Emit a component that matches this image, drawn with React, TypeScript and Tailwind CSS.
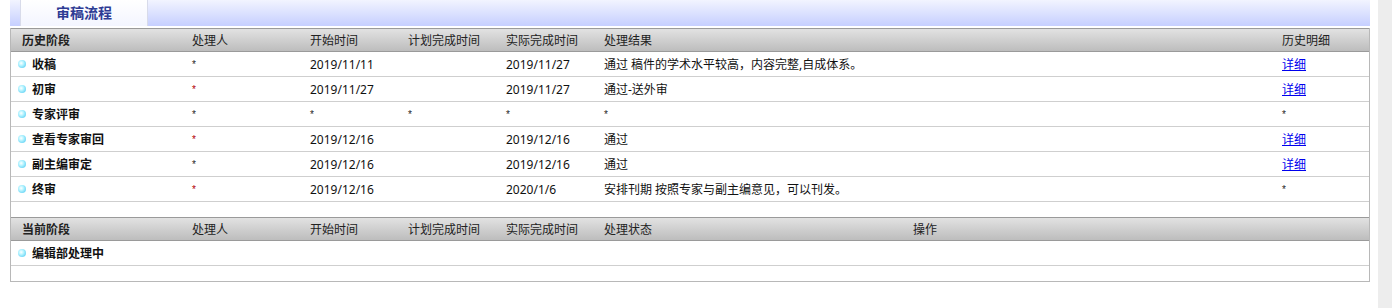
import React from 'react'

type Step = {
  name: string
  handler: string
  red?: boolean
  start: string
  plan: string
  done: string
  result: string
  detail: 'link' | 'star'
}

const history: Step[] = [
  { name: '收稿', handler: '*', start: '2019/11/11', plan: '', done: '2019/11/27', result: '通过 稿件的学术水平较高，内容完整,自成体系。', detail: 'link' },
  { name: '初审', handler: '*', red: true, start: '2019/11/27', plan: '', done: '2019/11/27', result: '通过-送外审', detail: 'link' },
  { name: '专家评审', handler: '*', start: '*', plan: '*', done: '*', result: '*', detail: 'star' },
  { name: '查看专家审回', handler: '*', red: true, start: '2019/12/16', plan: '', done: '2019/12/16', result: '通过', detail: 'link' },
  { name: '副主编审定', handler: '*', start: '2019/12/16', plan: '', done: '2019/12/16', result: '通过', detail: 'link' },
  { name: '终审', handler: '*', red: true, start: '2019/12/16', plan: '', done: '2020/1/6', result: '安排刊期 按照专家与副主编意见，可以刊发。', detail: 'star' },
]

const histCols = 'grid grid-cols-[171px_118px_98px_98px_98px_678px_1fr]'
const curCols = 'grid grid-cols-[171px_118px_98px_98px_98px_309px_1fr]'
const headCls = 'h-[24px] items-center pt-[1px] border-y border-[#9a9a9a] bg-gradient-to-b from-[#e2e2e2] to-[#bdbdbd] text-[#222]'
const rowCls = 'h-[25px] items-center pt-[2px] border-b border-[#cfcfcf] text-[#111]'

function Bullet() {
  return (
    <span className="relative top-[-1px] mr-[6px] inline-block h-[8px] w-[8px] rounded-full bg-[radial-gradient(circle_at_40%_40%,#ffffff_0%,#b8f4ff_35%,#3fc4f0_100%)]" />
  )
}

// 空值占位的小星号
function Star({ red }: { red?: boolean }) {
  return (
    <span className={`relative top-[-1px] font-['Liberation_Sans',sans-serif] text-[10px] ${red ? 'text-[#b00000]' : 'text-[#222]'}`}>*</span>
  )
}

function Cell({ v, red }: { v: string; red?: boolean }) {
  return <div className="pl-[10px]">{v === '*' ? <Star red={red} /> : v}</div>
}

function StageCell({ name }: { name: string }) {
  return (
    <div className="flex items-center pl-[7px] font-bold">
      <Bullet />
      {name}
    </div>
  )
}

export default function App() {
  return (
    <div className="flex h-[308px] w-[1392px] bg-white font-['Noto_Sans','Noto_Sans_CJK_SC',sans-serif] text-[12px] leading-none">
      <div className="w-[1378px] pl-[10px] pr-[8px]">
        {/* 标签栏 */}
        <div className="flex h-[26px] bg-gradient-to-b from-[#f2f4ff] to-[#c6cfff]">
          <div className="ml-[10px] flex w-[128px] items-center justify-center border-x border-[#d8dbea] bg-gradient-to-b from-white to-[#f3f5ff] text-[14px] font-bold text-[#2d3b94]">
            审稿流程
          </div>
        </div>

        <div className="mt-[2px] border-x border-b border-[#b8b8b8]">
          {/* 历史阶段 */}
          <div className={`${histCols} ${headCls}`}>
            <div className="pl-[11px] font-bold">历史阶段</div>
            <div className="pl-[10px]">处理人</div>
            <div className="pl-[10px]">开始时间</div>
            <div className="pl-[10px]">计划完成时间</div>
            <div className="pl-[10px]">实际完成时间</div>
            <div className="pl-[10px]">处理结果</div>
            <div className="pl-[10px]">历史明细</div>
          </div>
          {history.map((s) => (
            <div key={s.name} className={`${histCols} ${rowCls}`}>
              <StageCell name={s.name} />
              <Cell v={s.handler} red={s.red} />
              <Cell v={s.start} />
              <Cell v={s.plan} />
              <Cell v={s.done} />
              <Cell v={s.result} />
              <div className="pl-[10px]">
                {s.detail === 'link' ? (
                  <a href="#" className="text-[#0000ee] underline">详细</a>
                ) : (
                  <Star />
                )}
              </div>
            </div>
          ))}
          <div className="h-[15px]" />

          {/* 当前阶段 */}
          <div className={`${curCols} ${headCls}`}>
            <div className="pl-[11px] font-bold">当前阶段</div>
            <div className="pl-[10px]">处理人</div>
            <div className="pl-[10px]">开始时间</div>
            <div className="pl-[10px]">计划完成时间</div>
            <div className="pl-[10px]">实际完成时间</div>
            <div className="pl-[10px]">处理状态</div>
            <div className="pl-[10px]">操作</div>
          </div>
          <div className={`${curCols} ${rowCls}`}>
            <StageCell name="编辑部处理中" />
          </div>
          <div className="h-[15px]" />
        </div>
      </div>
      <div className="h-full w-[14px] bg-[#ededed]" />
    </div>
  )
}
